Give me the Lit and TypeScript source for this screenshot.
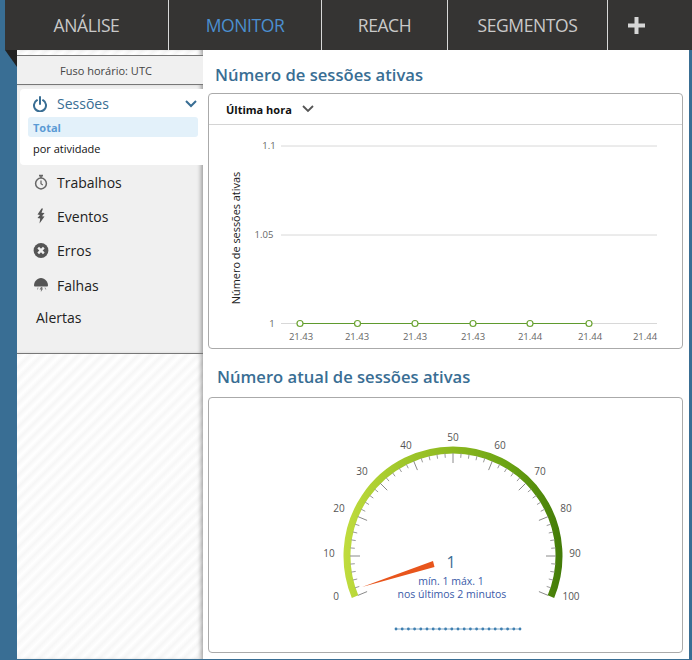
import { LitElement, html, css, svg } from "lit";
import { customElement } from "lit/decorators.js";

const FONT = `"Open Sans", "Noto Sans", sans-serif`;
const CX = 453;
const CY = 556;

const polar = (v: number, r: number) => {
  const a = ((v - 50) * 2.25 * Math.PI) / 180;
  return [CX + r * Math.sin(a), CY - r * Math.cos(a)];
};

const labels: [string, number, number][] = [
  ["0", 336, 596], ["10", 329, 553], ["20", 339, 508], ["30", 362, 471],
  ["40", 406, 445], ["50", 453, 437], ["60", 500, 445], ["70", 540, 471],
  ["80", 566, 508], ["90", 575, 553], ["100", 571, 596],
];

const xLabels: [string, number][] = [
  ["21.43", 301], ["21.43", 357], ["21.43", 415], ["21.43", 473],
  ["21.44", 530], ["21.44", 590], ["21.44", 645],
];
const markers = [300, 357.5, 415, 473, 530, 589];

@customElement("app-root")
export class AppRoot extends LitElement {
  static styles = css`
    :host {
      display: block;
      position: relative;
      height: 660px;
      background: #396e94;
      font-family: "Open Sans", "Noto Sans", sans-serif;
      overflow: hidden;
    }
    .nav {
      display: grid;
      grid-template-columns: 164px 153px 126px 160px 1fr;
      height: 50px;
      margin-left: 5px;
      background: #353433;
    }
    .nav-item {
      display: flex;
      align-items: center;
      justify-content: center;
      border-right: 1px solid #d8d8d8;
      color: #c9c9c9;
      font-size: 17.5px;
      letter-spacing: -0.4px;
    }
    .nav-item.active { color: #4b8fd0; }
    .nav-item.plus {
      border-right: none;
      justify-content: flex-start;
      padding-left: 20px;
    }
    .corner {
      position: absolute;
      left: 5px;
      top: 50px;
      width: 0;
      height: 0;
      border-top: 17px solid #222;
      border-left: 12px solid transparent;
    }
    .shell {
      display: flex;
      height: 609px;
      margin: 0 3px 0 17px;
    }
    .side {
      width: 186px;
      flex: none;
      display: flex;
      flex-direction: column;
      background: repeating-linear-gradient(135deg, #ffffff 0, #f6f6f6 4px, #ffffff 8.5px);
      box-shadow: inset -4px 0 4px -2px rgba(0, 0, 0, 0.35);
    }
    .tz {
      margin-top: 5px;
      height: 28px;
      flex: none;
      display: flex;
      align-items: center;
      justify-content: center;
      padding-right: 8px;
      background: #f0f0f0;
      border-top: 1px solid #777;
      border-bottom: 1px solid #777;
      color: #444;
      font-size: 11px;
    }
    .menu {
      height: 269px;
      flex: none;
      box-sizing: border-box;
      padding-top: 4px;
      background: #f0f0f0;
      border-bottom: 1px solid #777;
      box-shadow: inset -4px 0 4px -2px rgba(0, 0, 0, 0.35);
    }
    .panel {
      margin-left: 3px;
      height: 76px;
      box-sizing: border-box;
      padding: 2px 5px 0 8px;
      background: #fff;
      border-radius: 4px 0 0 4px;
    }
    .panel-head {
      display: flex;
      align-items: center;
      height: 25px;
      padding-left: 5px;
      color: #396e94;
      font-size: 14px;
    }
    .panel-head svg:first-child { margin-right: 10px; }
    .panel-head .chev { margin-left: auto; margin-right: 1px; }
    .sub {
      height: 20px;
      display: flex;
      align-items: center;
      padding-left: 5px;
      margin-bottom: 2px;
      font-size: 11px;
      color: #111;
    }
    .sub.on {
      background: #e3f1fa;
      border-radius: 3px;
      color: #5b9bd5;
      font-weight: 700;
      margin-top: 1px;
      margin-bottom: 1px;
    }
    .row {
      display: flex;
      align-items: center;
      height: 34px;
      padding-left: 16px;
      font-size: 14px;
      color: #222;
    }
    .row.low { margin-top: 1px; }
    .icon { width: 16px; height: 16px; margin-right: 8px; flex: none; }
    .row.plain { padding-left: 19px; height: 30px; }
    .main {
      flex: 1;
      min-width: 0;
      background: #fff;
      display: flex;
      flex-direction: column;
      padding: 12px 6px 0 5px;
    }
    h2 {
      margin: 0 0 5px;
      height: 26px;
      line-height: 26px;
      padding-left: 7px;
      font-size: 16.6px;
      font-weight: 600;
      color: #396e94;
      flex: none;
    }
    h2.second { margin-top: 15px; padding-left: 9px; margin-bottom: 7px; }
    .card {
      height: 256px;
      flex: none;
      box-sizing: border-box;
      border: 1px solid #aaa;
      border-radius: 4px;
      overflow: hidden;
    }
    .card svg.plot { display: block; }
    .card-head {
      height: 31px;
      box-sizing: border-box;
      border-bottom: 1px solid #d4d4d4;
      display: flex;
      align-items: center;
      gap: 10px;
      padding-left: 17px;
      font-size: 11px;
      font-weight: 700;
      color: #111;
    }
    text { font-family: "Open Sans", "Noto Sans", sans-serif; }
    .tick { font-size: 9.5px; fill: #666; text-anchor: middle; }
    .ylab { font-size: 10.9px; fill: #222; text-anchor: middle; }
    .gl { font-size: 10px; fill: #555; text-anchor: middle; }
    .val { font-size: 16px; fill: #396e94; text-anchor: middle; }
    .note { font-size: 10.5px; fill: #3a5aa8; text-anchor: middle; }
  `;

  private chart() {
    return html`<svg class="plot" width="473" height="224" viewBox="209 125 473 224">
      ${[146, 235, 323.5].map(
        (y) => svg`<line x1="281" x2="657" y1=${y} y2=${y} stroke="#d8d8d8"/>`
      )}
      <text class="tick" x="269" y="149">1.1</text>
      <text class="tick" x="264" y="238">1.05</text>
      <text class="tick" x="272" y="327">1</text>
      <text class="ylab" transform="translate(240 238) rotate(-90)">Número de sessões ativas</text>
      <line x1="300" x2="589" y1="323.5" y2="323.5" stroke="#5f9a2e" stroke-width="1.2"/>
      ${markers.map(
        (x) => svg`<circle cx=${x} cy="323.5" r="3" fill="#fff" stroke="#6da534" stroke-width="1.2"/>`
      )}
      ${xLabels.map(([t, x]) => svg`<text class="tick" x=${x} y="340">${t}</text>`)}
    </svg>`;
  }

  private gauge() {
    const [sx, sy] = polar(0, 106);
    const [ex, ey] = polar(100, 106);
    const ticks = [];
    for (let v = 0; v <= 100; v += 2) {
      const major = v % 10 === 0;
      const [x1, y1] = polar(v, 103);
      const [x2, y2] = polar(v, major ? 93 : 98.5);
      ticks.push(
        svg`<line x1=${x1} y1=${y1} x2=${x2} y2=${y2} stroke=${major ? "#8a8a8a" : "#999"} stroke-width="1"/>`
      );
    }
    const dots = Array.from({ length: 21 }, (_, i) => 396 + i * 6.2);
    return html`<svg class="plot" width="473" height="254" viewBox="209 398 473 254">
      <defs>
        <linearGradient id="arc" gradientUnits="userSpaceOnUse" x1="343" y1="0" x2="563" y2="0">
          <stop offset="0" stop-color="#c0dc3e"/>
          <stop offset="0.25" stop-color="#a2c82b"/>
          <stop offset="0.5" stop-color="#8cb81f"/>
          <stop offset="0.75" stop-color="#6aa312"/>
          <stop offset="1" stop-color="#427a08"/>
        </linearGradient>
      </defs>
      <path d="M${sx} ${sy} A106 106 0 1 1 ${ex} ${ey}" fill="none" stroke="url(#arc)" stroke-width="7"/>
      ${ticks}
      ${labels.map(([t, x, y]) => svg`<text class="gl" x=${x} y=${y + 3.5}>${t}</text>`)}
      <polygon points="362,587 433,561 434.5,567" fill="#e8551c"/>
      <text class="val" x="451" y="567.5">1</text>
      <text class="note" x="451" y="585">mín. 1 máx. 1</text>
      <text class="note" x="452" y="598">nos últimos 2 minutos</text>
      <line x1="396" x2="520" y1="629" y2="629" stroke="#7fa9c9" stroke-width="1"/>
      ${dots.map((x) => svg`<circle cx=${x} cy="629" r="1.4" fill="#3f7fb0"/>`)}
    </svg>`;
  }

  render() {
    return html`
      <div class="nav">
        <div class="nav-item">ANÁLISE</div>
        <div class="nav-item active">MONITOR</div>
        <div class="nav-item">REACH</div>
        <div class="nav-item">SEGMENTOS</div>
        <div class="nav-item plus">
          <svg width="17" height="17" viewBox="0 0 17 17"><path d="M6.5 0h4v6.5H17v4h-6.5V17h-4v-6.5H0v-4h6.5z" fill="#d6d6d6"/></svg>
        </div>
      </div>
      <div class="corner"></div>
      <div class="shell">
        <div class="side">
          <div class="tz">Fuso horário: UTC</div>
          <div class="menu">
            <div class="panel">
              <div class="panel-head">
                <svg width="14" height="16" viewBox="0 0 14 16" fill="none" stroke="#396e94" stroke-width="2" stroke-linecap="round">
                  <path d="M4 4.2A6 6 0 1 0 10 4.2"/><path d="M7 1v7"/>
                </svg>
                Sessões
                <svg class="chev" width="12" height="8" viewBox="0 0 12 8" fill="none" stroke="#396e94" stroke-width="2"><path d="M1 1l5 5 5-5"/></svg>
              </div>
              <div class="sub on">Total</div>
              <div class="sub">por atividade</div>
            </div>
            <div class="rows">
              <div class="row">
                <svg class="icon" viewBox="0 0 16 16" fill="none" stroke="#666" stroke-width="1.5">
                  <circle cx="8" cy="9.5" r="5.4"/><path d="M8 6.5v3.2l1.8 1.2" stroke-width="1.2"/><path d="M6 1.6h4M8 1.600v2.400" stroke-width="1.6"/>
                </svg>
                Trabalhos
              </div>
              <div class="row">
                <svg class="icon" viewBox="0 0 16 16"><path d="M8.500.5L4.500 6.500l2.500.5L4.500 10l2.700.4-.7 5.100 5-7-2.500-.2L11.500 5l-3-.2L10 .5z" fill="#555"/></svg>
                Eventos
              </div>
              <div class="row">
                <svg class="icon" viewBox="0 0 16 16">
                  <circle cx="8" cy="8.500" r="7.400" fill="#555"/>
                  <path d="M5.200 5.700l5.600 5.600M10.800 5.700l-5.600 5.600" stroke="#f0f0f0" stroke-width="2.400"/>
                </svg>
                Erros
              </div>
              <div class="row low">
                <svg class="icon" viewBox="0 0 16 16">
                  <path d="M1 8.500C1 5 4 1 8 1s7 4 7 7.500c0 1-1 1-2 1H3c-1 0-2 0-2-1z" fill="#555"/>
                  <path d="M8 10l-1.500 2.500H8L7.800 15l2.400-3.500H9l.5-1.500z" fill="#777"/>
                  <path d="M5 10.500l-.5 2M12 10.500l.8 2" stroke="#999" stroke-width="1"/>
                </svg>
                Falhas
              </div>
              <div class="row plain">Alertas</div>
            </div>
          </div>
        </div>
        <div class="main">
          <h2>Número de sessões ativas</h2>
          <div class="card">
            <div class="card-head">
              Última hora
              <svg width="12" height="8" viewBox="0 0 12 8" fill="none" stroke="#555" stroke-width="1.8"><path d="M1 1l5 5 5-5"/></svg>
            </div>
            ${this.chart()}
          </div>
          <h2 class="second">Número atual de sessões ativas</h2>
          <div class="card">${this.gauge()}</div>
        </div>
      </div>
    `;
  }
}
